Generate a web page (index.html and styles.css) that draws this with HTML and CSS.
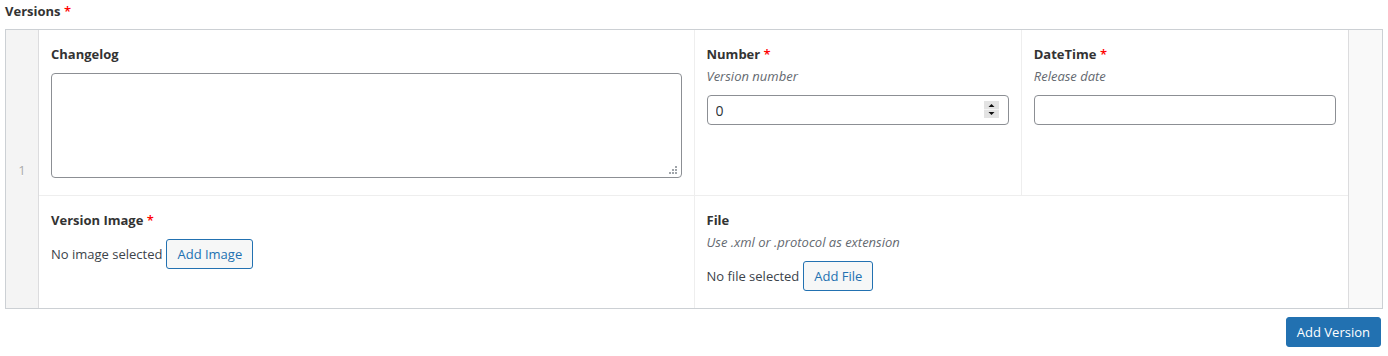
FILE: index.html
```html
<!DOCTYPE html>
<html>
<head>
<meta charset="utf-8">
<link rel="stylesheet" href="styles.css">
</head>
<body>
<div class="field-wrap">
  <div class="main-label">Versions <span class="req">*</span></div>
  <div class="repeater">
    <div class="order">1</div>
    <div class="fields">
      <div class="fld w50">
        <div class="lbl">Changelog</div>
        <div class="ta-wrap">
          <textarea class="ta"></textarea>
          <svg class="grip" width="9" height="9" viewBox="0 0 9 9"><rect x="6" y="0" width="2" height="2" fill="#a0a5aa"/><rect x="3" y="3" width="2" height="2" fill="#a0a5aa"/><rect x="6" y="3" width="2" height="2" fill="#a0a5aa"/><rect x="0" y="6" width="2" height="2" fill="#a0a5aa"/><rect x="3" y="6" width="2" height="2" fill="#a0a5aa"/><rect x="6" y="6" width="2" height="2" fill="#a0a5aa"/></svg>
        </div>
      </div>
      <div class="fld w25 bl">
        <div class="lbl">Number <span class="req">*</span></div>
        <div class="desc">Version number</div>
        <div class="num-wrap">
          <input class="inp" type="text" value="0">
          <svg class="spin" width="15" height="17" viewBox="0 0 15 17"><rect x="0" y="0" width="15" height="17" fill="#e3e3e3"/><rect x="0" y="8" width="15" height="1" fill="#f4f4f4"/><path d="M4.5 6 L7.5 3 L10.5 6 Z" fill="#111"/><path d="M4.5 11 L10.5 11 L7.5 14 Z" fill="#111"/></svg>
        </div>
      </div>
      <div class="fld w25 bl">
        <div class="lbl">DateTime <span class="req">*</span></div>
        <div class="desc">Release date</div>
        <input class="inp" type="text" value="">
      </div>
      <div class="fld w50 bt last">
        <div class="lbl">Version Image <span class="req">*</span></div>
        <div class="uploader"><span>No image selected</span><button class="btn">Add Image</button></div>
      </div>
      <div class="fld w50 bt bl last">
        <div class="lbl">File</div>
        <div class="desc">Use .xml or .protocol as extension</div>
        <div class="uploader"><span>No file selected</span><button class="btn">Add File</button></div>
      </div>
    </div>
    <div class="remove"></div>
  </div>
  <div class="actions"><button class="btn-primary">Add Version</button></div>
</div>
</body>
</html>
```
FILE: styles.css
```css
* { box-sizing: border-box; }
html, body { margin: 0; padding: 0; background: #fff; }
body {
  font-family: "Open Sans", "Noto Sans", sans-serif;
  font-size: 13px;
  line-height: 18px;
  color: #3c434a;
}
.field-wrap { padding: 2px 5px 0 5px; }
.main-label { font-weight: 700; color: #333; margin-bottom: 9px; }
.req { color: #f00; font-weight: 600; }
.repeater {
  display: flex;
  border: 1px solid #ccd0d4;
  background: #fff;
}
.order {
  width: 33px;
  flex: none;
  background: #f4f4f4;
  border-right: 1px solid #dcdcde;
  color: #aaa;
  text-shadow: 0 1px 0 #fff;
  display: flex;
  align-items: center;
  justify-content: center;
  padding-top: 2px;
}
.remove {
  width: 34px;
  flex: none;
  background: #f9f9f9;
  border-left: 1px solid #dcdcde;
}
.fields {
  flex: 1;
  display: flex;
  flex-wrap: wrap;
}
.fld { padding: 15px 12px; }
.fld.last { padding-bottom: 17px; }
.w50 { width: 50%; }
.w25 { width: 25%; }
.bl { border-left: 1px solid #eee; }
.bt { border-top: 1px solid #eee; }
.lbl { font-weight: 700; color: #333; margin-bottom: 10px; }
.lbl + .desc { margin-top: -6px; margin-bottom: 10px; }
.desc { font-style: italic; color: #646970; }
.ta-wrap { position: relative; margin-bottom: 2px; }
.ta {
  display: block;
  width: 100%;
  height: 105px;
  border: 1px solid #8c8f94;
  border-radius: 4px;
  resize: none;
  font: inherit;
  padding: 2px 6px;
  background: #fff;
}
.grip { position: absolute; right: 4px; bottom: 3px; }
.num-wrap { position: relative; }
.spin { position: absolute; right: 10px; top: 6px; }
.inp {
  display: block;
  width: 100%;
  height: 30px;
  border: 1px solid #8c8f94;
  border-radius: 4px;
  padding: 0 8px;
  font: inherit;
  font-size: 14px;
  color: #2c3338;
  background: #fff;
}
.uploader { display: flex; align-items: center; gap: 4px; color: #3c434a; }
.btn {
  height: 30px;
  padding: 0 10px;
  border: 1px solid #2271b1;
  border-radius: 3px;
  background: #f6f7f7;
  color: #2271b1;
  font: inherit;
  font-size: 13px;
}
.actions { display: flex; justify-content: flex-end; margin-top: 8px; padding-right: 2px; }
.btn-primary {
  height: 30px;
  padding: 0 10px;
  border: 1px solid #2271b1;
  border-radius: 3px;
  background: #2271b1;
  color: #fff;
  font: inherit;
  font-size: 13px;
}
```
